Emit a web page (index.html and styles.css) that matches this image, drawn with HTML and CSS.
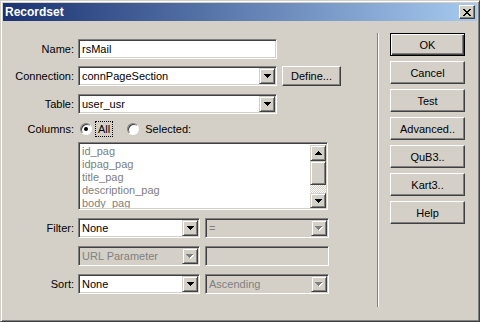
FILE: index.html
```html
<!DOCTYPE html>
<html lang="en">
<head>
    <meta charset="UTF-8">
    <title>Recordset</title>
    <link rel="stylesheet" href="styles.css">
</head>
<body>
    <div class="window">
        <div class="titlebar">
            <span class="title">Recordset</span>
            <span class="close">
                <svg width="8" height="7" viewBox="0 0 8 7" shape-rendering="crispEdges"><path d="M0 0h2v1h1v1h2v-1h1v-1h2v1h-1v1h-1v1h-1v1h1v1h1v1h1v1h-2v-1h-1v-1h-2v1h-1v1h-2v-1h1v-1h1v-1h1v-1h-1v-1h-1v-1h-1z" fill="#000"/></svg>
            </span>
        </div>
        <div class="body">
            <div class="form">
                <div class="row row-name">
                    <span class="label">Name:</span>
                    <div class="sunken input w-main">rsMail</div>
                </div>
                <div class="row">
                    <span class="label">Connection:</span>
                    <div class="sunken select w-main">
                        <span class="value">connPageSection</span>
                        <span class="drop"><svg width="7" height="4" viewBox="0 0 7 4" shape-rendering="crispEdges"><path d="M0 0h7v1h-1v1h-1v1h-1v1h-1v-1h-1v-1h-1v-1h-1z" fill="#000"/></svg></span>
                    </div>
                    <span class="btn btn-define">Define...</span>
                </div>
                <div class="row row-table">
                    <span class="label">Table:</span>
                    <div class="sunken select w-main">
                        <span class="value">user_usr</span>
                        <span class="drop"><svg width="7" height="4" viewBox="0 0 7 4" shape-rendering="crispEdges"><path d="M0 0h7v1h-1v1h-1v1h-1v1h-1v-1h-1v-1h-1v-1h-1z" fill="#000"/></svg></span>
                    </div>
                </div>
                <div class="row row-columns">
                    <span class="label">Columns:</span>
                    <span class="radio checked"></span>
                    <span class="focus">All</span>
                    <span class="radio radio-second"></span>
                    <span class="radio-text">Selected:</span>
                </div>
                <div class="row row-list">
                    <span class="label"></span>
                    <div class="sunken list">
                        <div class="items">
                            <div>id_pag</div>
                            <div>idpag_pag</div>
                            <div>title_pag</div>
                            <div>description_pag</div>
                            <div>body_pag</div>
                        </div>
                        <div class="scroll">
                            <span class="drop arrow"><svg width="7" height="4" viewBox="0 0 7 4" shape-rendering="crispEdges"><path d="M3 0h1v1h1v1h1v1h1v1h-7v-1h1v-1h1v-1h1z" fill="#000"/></svg></span>
                            <span class="thumb"></span>
                            <span class="track"></span>
                            <span class="drop arrow"><svg width="7" height="4" viewBox="0 0 7 4" shape-rendering="crispEdges"><path d="M0 0h7v1h-1v1h-1v1h-1v1h-1v-1h-1v-1h-1v-1h-1z" fill="#000"/></svg></span>
                        </div>
                    </div>
                </div>
                <div class="row">
                    <span class="label">Filter:</span>
                    <div class="sunken select w-half">
                        <span class="value">None</span>
                        <span class="drop"><svg width="7" height="4" viewBox="0 0 7 4" shape-rendering="crispEdges"><path d="M0 0h7v1h-1v1h-1v1h-1v1h-1v-1h-1v-1h-1v-1h-1z" fill="#000"/></svg></span>
                    </div>
                    <div class="sunken select w-right disabled">
                        <span class="value">=</span>
                        <span class="drop"><svg width="8" height="5" viewBox="0 0 8 5" shape-rendering="crispEdges"><path d="M1 1h7v1h-1v1h-1v1h-1v1h-1v-1h-1v-1h-1v-1h-1z" fill="#fff"/><path d="M0 0h7v1h-1v1h-1v1h-1v1h-1v-1h-1v-1h-1v-1h-1z" fill="#808080"/></svg></span>
                    </div>
                </div>
                <div class="row">
                    <span class="label"></span>
                    <div class="sunken select w-half disabled">
                        <span class="value">URL Parameter</span>
                        <span class="drop"><svg width="8" height="5" viewBox="0 0 8 5" shape-rendering="crispEdges"><path d="M1 1h7v1h-1v1h-1v1h-1v1h-1v-1h-1v-1h-1v-1h-1z" fill="#fff"/><path d="M0 0h7v1h-1v1h-1v1h-1v1h-1v-1h-1v-1h-1v-1h-1z" fill="#808080"/></svg></span>
                    </div>
                    <div class="sunken input w-right disabled"></div>
                </div>
                <div class="row">
                    <span class="label">Sort:</span>
                    <div class="sunken select w-half">
                        <span class="value">None</span>
                        <span class="drop"><svg width="7" height="4" viewBox="0 0 7 4" shape-rendering="crispEdges"><path d="M0 0h7v1h-1v1h-1v1h-1v1h-1v-1h-1v-1h-1v-1h-1z" fill="#000"/></svg></span>
                    </div>
                    <div class="sunken select w-right disabled">
                        <span class="value">Ascending</span>
                        <span class="drop"><svg width="8" height="5" viewBox="0 0 8 5" shape-rendering="crispEdges"><path d="M1 1h7v1h-1v1h-1v1h-1v1h-1v-1h-1v-1h-1v-1h-1z" fill="#fff"/><path d="M0 0h7v1h-1v1h-1v1h-1v1h-1v-1h-1v-1h-1v-1h-1z" fill="#808080"/></svg></span>
                    </div>
                </div>
            </div>
            <div class="sep"></div>
            <div class="buttons">
                <span class="btn btn-default">OK</span>
                <span class="btn">Cancel</span>
                <span class="btn">Test</span>
                <span class="btn">Advanced..</span>
                <span class="btn">QuB3..</span>
                <span class="btn">Kart3..</span>
                <span class="btn">Help</span>
            </div>
        </div>
    </div>
</body>
</html>
```

FILE: styles.css
```css
body {
    margin: 0;
    background: #fff;
    font-family: "Liberation Sans", Arial, sans-serif;
    font-size: 11px;
    color: #000;
}

/* window frame */
.window {
    width: 480px;
    height: 322px;
    box-sizing: border-box;
    background: #d4d0c8;
    border: 1px solid;
    border-color: #d4d0c8 #404040 #404040 #d4d0c8;
    box-shadow: inset 1px 1px #fff, inset -1px -1px #808080;
    padding: 2px;
}
.titlebar {
    height: 18px;
    display: flex;
    align-items: center;
    justify-content: space-between;
    background: linear-gradient(to right, #1a3272, #a6caf0);
    padding: 0 2px 0 2px;
}
.title {
    color: #fff;
    font-weight: bold;
    font-size: 12px;
}
.close {
    width: 16px;
    height: 14px;
    box-sizing: border-box;
    display: flex;
    align-items: center;
    justify-content: center;
    background: #d4d0c8;
    border: 1px solid;
    border-color: #fff #404040 #404040 #fff;
    box-shadow: inset -1px -1px #808080;
}
.body {
    display: flex;
    height: 298px;
}

/* form side */
.form {
    width: 374px;
    padding-top: 18px;
    box-sizing: border-box;
}
.row {
    display: flex;
    align-items: center;
    height: 20px;
    margin-bottom: 8px;
}
.row-name,
.row-table {
    margin-bottom: 7px;
}
.row-columns {
    height: 16px;
    margin-bottom: 5px;
}
.row-list {
    height: 68px;
}
.label {
    width: 71px;
    margin-right: 4px;
    text-align: right;
    flex-shrink: 0;
}

.sunken {
    box-sizing: border-box;
    height: 20px;
    border: 1px solid;
    border-color: #808080 #fff #fff #808080;
    box-shadow: inset 1px 1px #404040, inset -1px -1px #d4d0c8;
    background: #fff;
}
.input {
    padding-left: 3px;
    line-height: 18px;
}
.select {
    display: flex;
    align-items: center;
    padding: 1px;
}
.value {
    flex: 1;
    padding-left: 2px;
    white-space: nowrap;
    overflow: hidden;
}
.disabled {
    background: #d4d0c8;
    color: #808080;
}
.w-main { width: 199px; }
.w-half { width: 122px; }
.w-right { width: 124px; margin-left: 5px; }

.drop {
    width: 16px;
    height: 16px;
    box-sizing: border-box;
    display: flex;
    align-items: center;
    justify-content: center;
    border: 1px solid;
    border-color: #d4d0c8 #404040 #404040 #d4d0c8;
    box-shadow: inset 1px 1px #fff, inset -1px -1px #808080;
    background: #d4d0c8;
    flex-shrink: 0;
}

.btn {
    box-sizing: border-box;
    display: flex;
    align-items: center;
    justify-content: center;
    background: #d4d0c8;
    border: 1px solid;
    border-color: #fff #404040 #404040 #fff;
    box-shadow: inset -1px -1px #808080;
}
.btn-define {
    width: 59px;
    height: 20px;
    margin-left: 5px;
}

/* columns radios */
.radio {
    width: 12px;
    height: 12px;
    box-sizing: border-box;
    border-radius: 50%;
    border: 1px solid;
    border-color: #808080 #fff #fff #808080;
    box-shadow: inset 1px 1px #404040;
    background: #fff;
    margin-left: 2px;
    margin-right: 4px;
    display: flex;
    align-items: center;
    justify-content: center;
}
.radio.checked::after {
    content: "";
    width: 4px;
    height: 4px;
    border-radius: 50%;
    background: #000;
}
.radio-second {
    margin-left: 15px;
    margin-right: 6px;
}
.focus {
    outline: 1px dotted #000;
    padding: 0 2px;
    line-height: 14px;
}

/* column list */
.list {
    width: 250px;
    height: 68px;
    display: flex;
    padding: 1px;
}
.items {
    flex: 1;
    padding: 1px 0 0 2px;
    color: #808080;
    line-height: 13px;
    overflow: hidden;
}
.scroll {
    width: 16px;
    display: flex;
    flex-direction: column;
}
.arrow {
    margin-top: 1px;
    height: 16px;
}
.arrow:last-child {
    margin-top: 0;
    height: 15px;
}
.thumb {
    height: 24px;
    box-sizing: border-box;
    border: 1px solid;
    border-color: #d4d0c8 #404040 #404040 #d4d0c8;
    box-shadow: inset 1px 1px #fff, inset -1px -1px #808080;
    background: #d4d0c8;
}
.track {
    height: 8px;
    background: repeating-conic-gradient(#fff 0 25%, #d4d0c8 0 50%);
    background-size: 2px 2px;
}

/* right column */
.sep {
    width: 0;
    height: 274px;
    margin-top: 12px;
    border-left: 1px solid #808080;
    border-right: 1px solid #fff;
}
.buttons {
    margin-top: 12px;
    margin-left: 11px;
    display: flex;
    flex-direction: column;
    gap: 5px;
}
.buttons .btn {
    width: 75px;
    height: 23px;
}
.buttons .btn-default {
    border: 1px solid #000;
    box-shadow: inset 1px 1px #fff, inset -1px -1px #404040, inset -2px -2px #808080;
}
```
